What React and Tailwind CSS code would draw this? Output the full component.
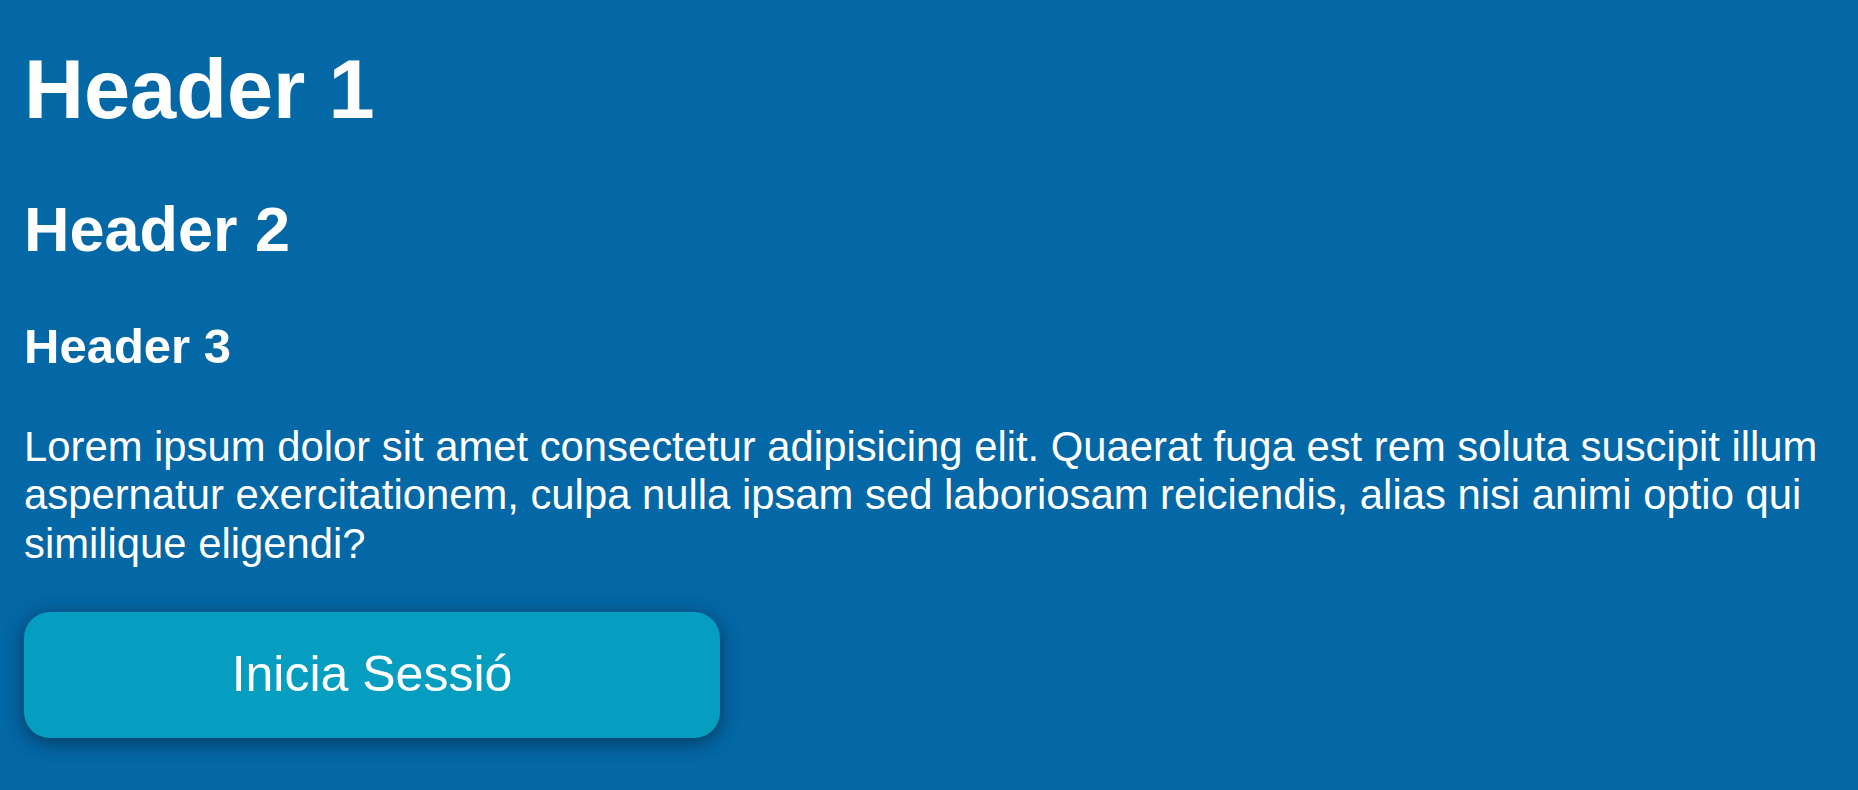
import React from 'react';

// Plain landing block: three heading levels, a paragraph and a login button.
const LOREM =
    'Lorem ipsum dolor sit amet consectetur adipisicing elit. Quaerat fuga est rem soluta suscipit illum aspernatur exercitationem, culpa nulla ipsam sed laboriosam reiciendis, alias nisi animi optio qui similique eligendi?';

function App() {
    return (
        <div className="min-h-screen bg-[#0467a6] text-white font-['Liberation_Sans',Arial,sans-serif] px-6 pt-[42px] pb-10">
            <h1 className="text-[83px] font-bold leading-[1.149]">Header 1</h1>
            <h2 className="mt-[56px] text-[63px] font-bold leading-[1.149]">Header 2</h2>
            <h3 className="mt-[52px] text-[49px] font-bold leading-[1.149]">Header 3</h3>
            <p className="mt-[49px] text-[41.8px] leading-[48.3px]">{LOREM}</p>
            <button
                type="button"
                className="mt-[44px] w-[696px] h-[126px] rounded-[26px] bg-[#059ec1] text-[50px] text-white shadow-[0_4px_20px_rgba(0,0,0,0.45)]"
            >
                Inicia Sessió
            </button>
        </div>
    );
}

export default App;
